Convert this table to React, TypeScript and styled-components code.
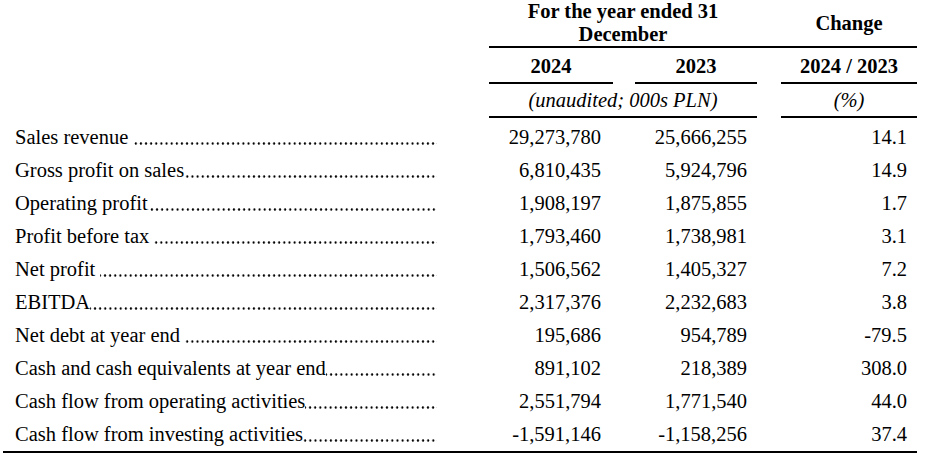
import styled, { createGlobalStyle } from 'styled-components'

const GlobalStyle = createGlobalStyle`
    html, body {
        margin: 0;
        padding: 0;
        background: #ffffff;
    }
    body {
        font-family: "Liberation Serif", "Times New Roman", serif;
        font-size: 20.5px;
        color: #000000;
    }
`

const COLS = '486px 124px 22px 122px 24px 136px'

const Sheet = styled.div`
    width: 914px;
    margin-left: 3px;
`

const HeadRow = styled.div<{ $lh: string }>`
    display: grid;
    grid-template-columns: ${COLS};
    line-height: ${p => p.$lh};
`

const HeadCell = styled.div<{ $col: string; $rule?: boolean; $pad: string; $italic?: boolean }>`
    grid-column: ${p => p.$col};
    display: flex;
    align-items: center;
    justify-content: center;
    text-align: center;
    padding: ${p => p.$pad};
    font-weight: ${p => (p.$italic ? 'normal' : 'bold')};
    font-style: ${p => (p.$italic ? 'italic' : 'normal')};
    border-bottom: 2px solid ${p => (p.$rule ? '#000000' : 'transparent')};
`

const Body = styled.div`
    padding-top: 3px;
    border-bottom: 2px solid #000000;
`

const DataRow = styled.div`
    display: grid;
    grid-template-columns: ${COLS};
    height: 33px;
    line-height: 33px;
`

const Label = styled.div`
    display: flex;
    padding: 0 52px 0 12px;
    white-space: pre;
`

// dotted leader, drawn as a repeating dot so it always ends flush at the column edge
const Leader = styled.span`
    flex: 1;
    background-image: radial-gradient(circle, #000000 0.9px, rgba(0, 0, 0, 0) 1.4px);
    background-size: 5.125px 3px;
    background-repeat: repeat-x;
    background-position: right 1px top 21px;
`

const Value = styled.div<{ $col: number; $pr: number }>`
    grid-column: ${p => p.$col};
    text-align: right;
    padding-right: ${p => p.$pr}px;
    white-space: nowrap;
`

const rows = [
    ['Sales revenue ', '29,273,780', '25,666,255', '14.1'],
    ['Gross profit on sales', '6,810,435', '5,924,796', '14.9'],
    ['Operating profit', '1,908,197', '1,875,855', '1.7'],
    ['Profit before tax ', '1,793,460', '1,738,981', '3.1'],
    ['Net profit ', '1,506,562', '1,405,327', '7.2'],
    ['EBITDA', '2,317,376', '2,232,683', '3.8'],
    ['Net debt at year end ', '195,686', '954,789', '-79.5'],
    ['Cash and cash equivalents at year end', '891,102', '218,389', '308.0'],
    ['Cash flow from operating activities', '2,551,794', '1,771,540', '44.0'],
    ['Cash flow from investing activities', '-1,591,146', '-1,158,256', '37.4'],
]

const App = () => {
    return (
        <>
            <GlobalStyle />
            <Sheet>
                <HeadRow $lh="23px">
                    <HeadCell $col="2 / 5" $pad="0" $rule>
                        For the year ended 31<br />December
                    </HeadCell>
                    <HeadCell $col="5" $pad="0" $rule />
                    <HeadCell $col="6" $pad="0" $rule>Change</HeadCell>
                </HeadRow>
                <HeadRow $lh="22px">
                    <HeadCell $col="2" $pad="7px 0 5px" $rule>2024</HeadCell>
                    <HeadCell $col="4" $pad="7px 0 5px" $rule>2023</HeadCell>
                    <HeadCell $col="6" $pad="7px 0 5px" $rule>2024 / 2023</HeadCell>
                </HeadRow>
                <HeadRow $lh="22px">
                    <HeadCell $col="2 / 5" $pad="5px 0" $rule $italic>(unaudited; 000s PLN)</HeadCell>
                    <HeadCell $col="6" $pad="5px 0" $rule $italic>(%)</HeadCell>
                </HeadRow>
                <Body>
                    {rows.map(([label, a, b, c]) => (
                        <DataRow key={label}>
                            <Label>
                                <span>{label}</span>
                                <Leader />
                            </Label>
                            <Value $col={2} $pr={12}>{a}</Value>
                            <Value $col={4} $pr={10}>{b}</Value>
                            <Value $col={6} $pr={10}>{c}</Value>
                        </DataRow>
                    ))}
                </Body>
            </Sheet>
        </>
    )
}

export default App
